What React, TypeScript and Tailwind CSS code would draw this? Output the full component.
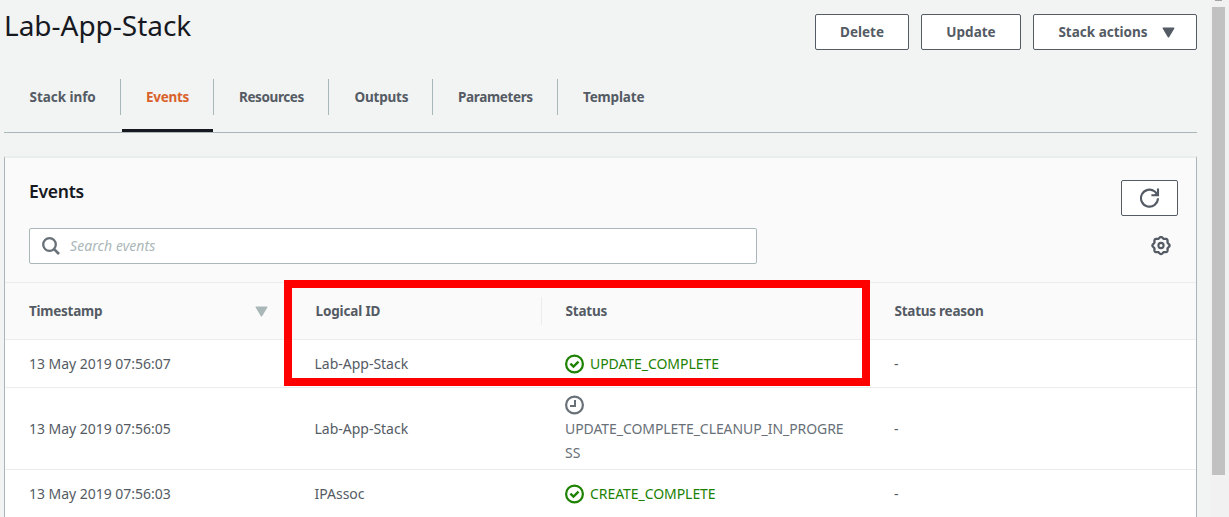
import type { ReactNode } from 'react';

function Caret({ className }: { className: string }) {
  return (
    <svg viewBox="0 0 14 12" className={className} fill="currentColor" stroke="currentColor" strokeWidth="1.6" strokeLinejoin="round">
      <path d="M1.3 1.3h11.4L7 10.7z" />
    </svg>
  );
}

function CheckIcon() {
  return (
    <svg viewBox="0 0 20 20" className="h-5 w-5 shrink-0" fill="none" stroke="currentColor" strokeWidth="2.2">
      <circle cx="9.5" cy="10" r="8.4" />
      <path d="M5.4 9.6l3.1 3 5-5" strokeWidth="2.4" />
    </svg>
  );
}

function ClockIcon() {
  return (
    <svg viewBox="0 0 20 20" className="h-5 w-5 shrink-0" fill="none" stroke="currentColor" strokeWidth="2.2">
      <circle cx="9.5" cy="10" r="8.4" />
      <path d="M10 5v6H5" strokeWidth="2" />
    </svg>
  );
}

function SearchIcon() {
  return (
    <svg viewBox="0 0 18 18" className="h-[18px] w-[18px] shrink-0 text-[#687078]" fill="none" stroke="currentColor" strokeWidth="2.3">
      <circle cx="7.5" cy="7.5" r="6.3" />
      <path d="M11.8 11.8l5.2 5.2" strokeWidth="2.6" />
    </svg>
  );
}

function RefreshIcon() {
  return (
    <svg viewBox="0 0 20 20" className="h-5 w-5" fill="none" stroke="currentColor" strokeWidth="2.1">
      <path d="M18 10.3A8.5 8.5 0 1 1 14.8 3.5l2.4 2.4" />
      <path d="M18 .6v6.6h-6.6" />
      <path d="M18 3v4h-4z" fill="currentColor" stroke="none" />
    </svg>
  );
}

const gearOutline =
  Array.from({ length: 96 }, (_, i) => {
    const angle = (i / 96) * Math.PI * 2;
    const radius = 7.9 + 0.7 * Math.cos(angle * 8);
    const x = 10 + radius * Math.sin(angle);
    const y = 9.5 - radius * Math.cos(angle);
    return `${i === 0 ? 'M' : 'L'}${x.toFixed(2)} ${y.toFixed(2)}`;
  }).join('') + 'Z';

function GearIcon() {
  return (
    <svg viewBox="0 0 20 20" className="h-5 w-5" fill="none" stroke="currentColor" strokeWidth="2.3">
      <path d={gearOutline} />
      <circle cx="10" cy="9.5" r="2.6" strokeWidth="2.1" />
    </svg>
  );
}

function ActionButton({ width, children }: { width: string; children: ReactNode }) {
  return (
    <button
      className={`flex h-9 items-center justify-center rounded-[2px] border border-[#545b64] bg-white text-[13.5px] font-bold text-[#545b64] ${width}`}
    >
      {children}
    </button>
  );
}

const tabs = [
  { label: 'Stack info', width: 'w-[117px]', pad: 'pl-[25.5px]', track: 'tracking-[-0.05px]' },
  { label: 'Events', width: 'w-[93px]', pad: 'pl-[25px]', track: 'tracking-[-0.3px]' },
  { label: 'Resources', width: 'w-[115px]', pad: 'pl-[25px]', track: 'tracking-[-0.4px]' },
  { label: 'Outputs', width: 'w-[104px]', pad: 'pl-[25.5px]', track: 'tracking-[-0.2px]' },
  { label: 'Parameters', width: 'w-[125px]', pad: 'pl-[25px]', track: 'tracking-[-0.35px]' },
  { label: 'Template', width: 'w-[115px]', pad: 'pl-[25px]', track: 'tracking-[-0.15px]' },
];

const columns = 'grid grid-cols-[286px_251px_329px_1fr]';

function Row({ height, time, id, status }: { height: string; time: string; id: string; status: ReactNode }) {
  return (
    <div className={`${columns} ${height} items-center border-b border-[#eaeded] bg-white text-[#545b64]`}>
      <div className="pl-6">
        <span className="tracking-[-0.03px]">{time}</span>
      </div>
      <div className="pl-[23.5px]">
        <span className="tracking-[-0.01px]">{id}</span>
      </div>
      <div className="pl-[23px]">{status}</div>
      <div className="pl-[23px]">-</div>
    </div>
  );
}

function Complete({ children }: { children: string }) {
  return (
    <div className="flex items-center gap-[5px] text-[#1d8102]">
      <CheckIcon />
      <span className="tracking-[-0.06px]">{children}</span>
    </div>
  );
}

export default function App() {
  return (
    <div className="relative flex h-[517px] w-[1229px] overflow-hidden whitespace-nowrap bg-[#f2f3f3] font-['Noto_Sans','Open_Sans',sans-serif] text-[14px] leading-6">
      <main className="flex w-[1197px] flex-col pl-1">
        <header className="flex h-[79px] shrink-0 items-start justify-between">
          <h1 className="pt-[7px] text-[28px] leading-[36px] text-[#16191f]">
            <span className="tracking-[-0.02px]">Lab-App-Stack</span>
          </h1>
          <div className="flex gap-3 pt-[14px]">
            <ActionButton width="w-[94px]"><span>Delete</span></ActionButton>
            <ActionButton width="w-[100px]"><span>Update</span></ActionButton>
            <ActionButton width="w-[164px]">
              <span className="ml-[3px]">Stack actions</span>
              <Caret className="ml-[14px] h-[11px] w-[13px]" />
            </ActionButton>
          </div>
        </header>

        <nav className="flex h-[54px] shrink-0 border-b border-[#aab7b8]">
          {tabs.map((tab, i) => (
            <div key={tab.label} className={`flex flex-col justify-between ${tab.width}`}>
              <div
                className={`h-9 text-[13.5px] leading-9 font-bold ${tab.pad} ${i < 5 ? 'border-r border-[#aab7b8]' : ''} ${i === 1 ? 'text-[#d9622b]' : 'text-[#545b64]'}`}
              >
                <span className={tab.track}>{tab.label}</span>
              </div>
              {i === 1 && <div className="mr-px ml-px h-[3px] bg-[#16191f]" />}
            </div>
          ))}
        </nav>

        <section className="mt-[23px] h-[400px] shrink-0 border-x border-t-2 border-x-[#aab7b8] border-t-[#eaeded] bg-[#fafafa]">
          <div className="flex h-[124px] justify-between pr-[18px] pl-6">
            <div>
              <h2 className="mt-[21px] text-[17.5px] leading-6 font-semibold text-[#16191f]">
                <span className="tracking-[-0.25px]">Events</span>
              </h2>
              <div className="mt-[25px] flex h-9 w-[728px] items-center rounded-[2px] border border-[#aab7b8] bg-white pl-3">
                <SearchIcon />
                <span className="ml-[10px] text-[#aab7b8] italic tracking-[0.07px]">Search events</span>
              </div>
            </div>
            <div className="flex flex-col items-end pt-[22px] text-[#545b64]">
              <button className="flex h-9 w-[57px] items-center justify-center rounded-[2px] border border-[#545b64] bg-white">
                <RefreshIcon />
              </button>
              <div className="mt-5 mr-[7px]"><GearIcon /></div>
            </div>
          </div>

          <div className={`${columns} h-[58px] items-center border-y border-[#eaeded] text-[13.5px] font-bold text-[#545b64]`}>
            <div className="flex h-7 items-center justify-between border-r border-[#eaeded] pr-[22px] pl-6">
              <span className="tracking-[-0.25px]">Timestamp</span>
              <Caret className="h-[11px] w-[13px] text-[#aab7b8]" />
            </div>
            <div className="flex h-7 items-center border-r border-[#eaeded] pl-[24.5px]">
              <span className="tracking-[-0.15px]">Logical ID</span>
            </div>
            <div className="flex h-7 items-center pl-[23.5px]">
              <span className="tracking-[-0.2px]">Status</span>
            </div>
            <div className="flex h-7 items-center pl-[23.5px]">
              <span className="tracking-[-0.25px]">Status reason</span>
            </div>
          </div>

          <Row height="h-12" time="13 May 2019 07:56:07" id="Lab-App-Stack" status={<Complete>UPDATE_COMPLETE</Complete>} />
          <Row
            height="h-[82px]"
            time="13 May 2019 07:56:05"
            id="Lab-App-Stack"
            status={
              <div className="text-[#687078]">
                <div className="flex h-6 items-center"><ClockIcon /></div>
                <div className="tracking-[-0.07px]">UPDATE_COMPLETE_CLEANUP_IN_PROGRE</div>
                <div>SS</div>
              </div>
            }
          />
          <Row height="h-12" time="13 May 2019 07:56:03" id="IPAssoc" status={<Complete>CREATE_COMPLETE</Complete>} />
        </section>
      </main>

      <div className="ml-[13px] flex w-[19px] flex-col bg-[#f1f1f1] pl-[2px]">
        <div className="ml-[3px] h-px w-[7px] bg-[#a3a3a3]" />
        <div className="mt-[6px] h-[468px] w-[13px] bg-[#c1c1c1]" />
      </div>

      <div className="absolute top-[280px] left-[284px] h-[106px] w-[586px] border-8 border-[#ff0000]" />
    </div>
  );
}
